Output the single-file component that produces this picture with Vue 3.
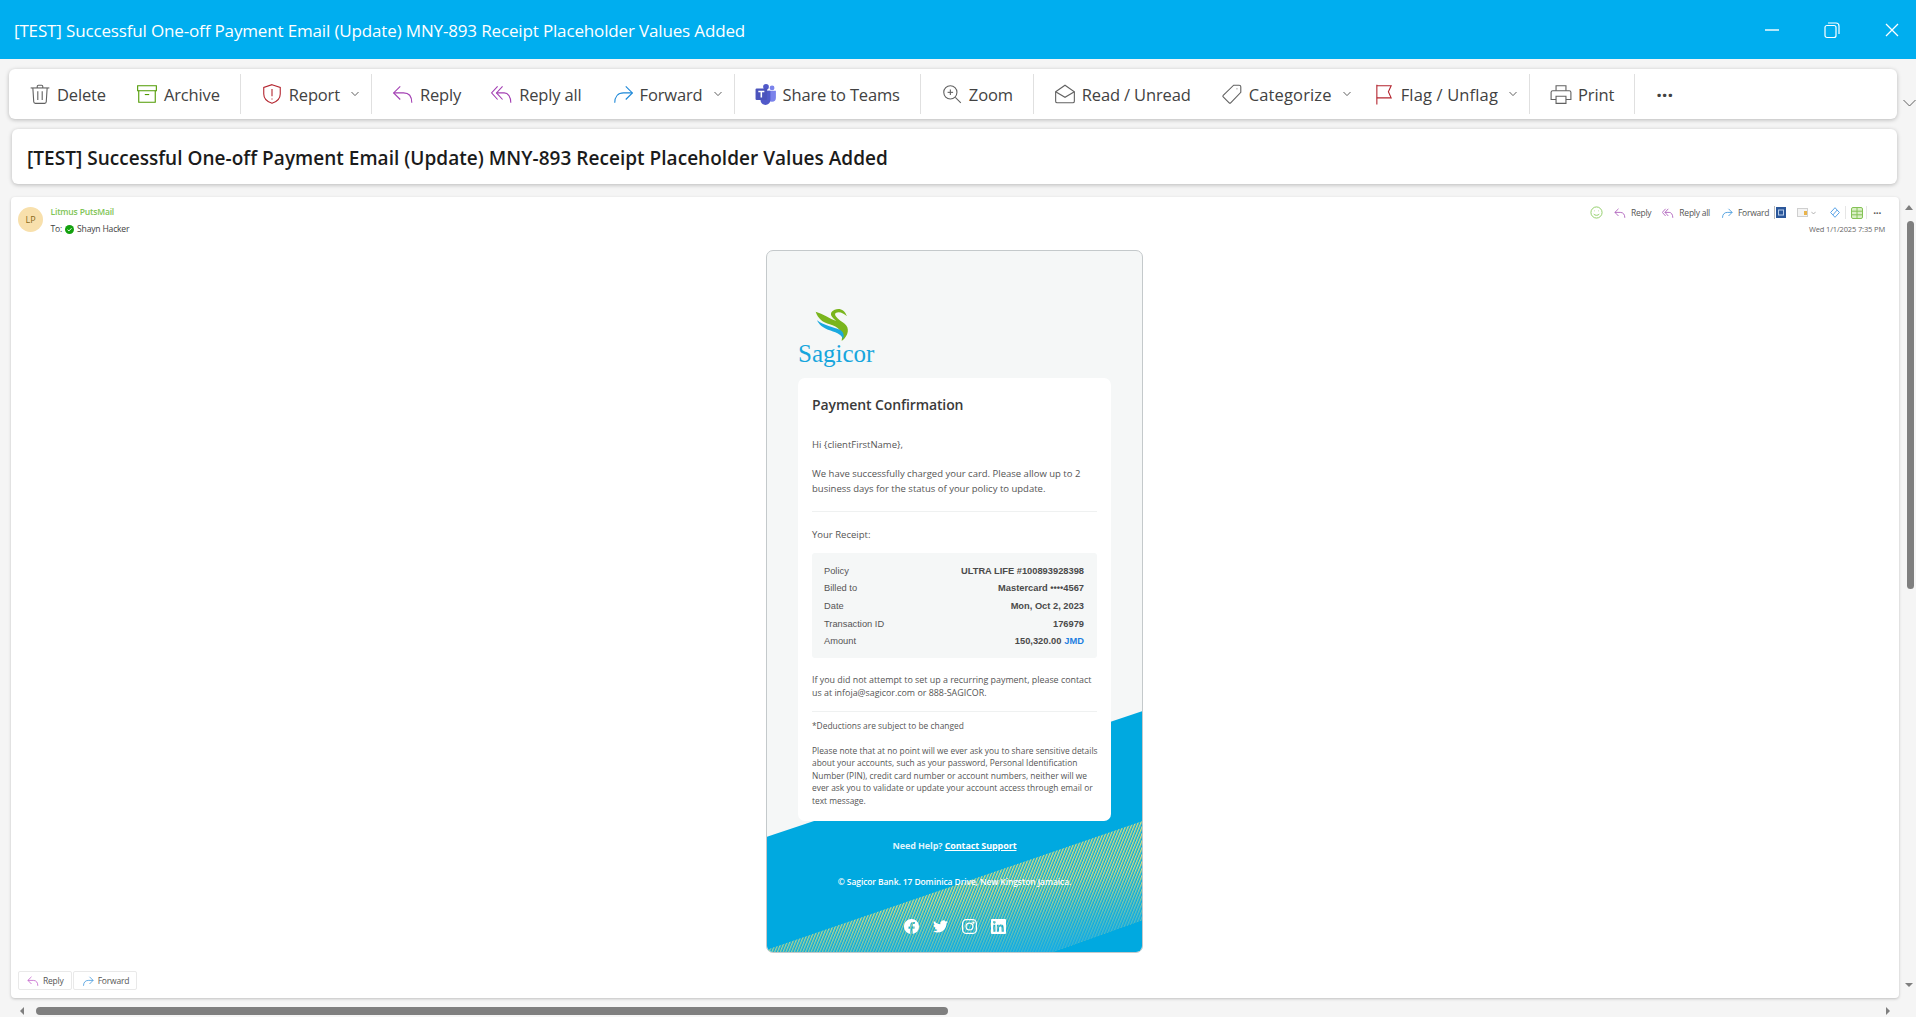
<template>
  <div class="window">
    <header class="titlebar">
      <span class="titlebar-text">{{ subject }}</span>
      <div class="win-controls">
        <svg width="16" height="16" viewBox="0 0 16 16"><path d="M1 8h14" stroke="#fff" stroke-width="1.4" /></svg>
        <svg width="18" height="18" viewBox="0 0 18 18" fill="none" stroke="#fff" stroke-width="1.2"><rect x="2" y="4.5" width="11" height="12" rx="2" /><path d="M5 2h8a3 3 0 0 1 3 3v8" /></svg>
        <svg width="16" height="16" viewBox="0 0 16 16"><path d="M2 2l12 12M14 2L2 14" stroke="#fff" stroke-width="1.3" /></svg>
      </div>
    </header>

    <div class="toolbar-row">
      <nav class="toolbar">
        <template v-for="item in toolbar" :key="item.label || item.sep">
          <span v-if="item.sep" class="tb-sep"></span>
          <button v-else :class="['tb-btn', { 'has-caret': item.caret, loose: item.loose }]">
            <svg v-if="item.icon" class="tb-icon" viewBox="0 0 20 20" fill="none" :stroke="item.color || '#616161'" stroke-width="1">
              <path v-for="d in icons[item.icon]" :key="d" :d="d" />
            </svg>
            <svg v-else class="tb-icon" viewBox="0 0 20 20">
              <circle cx="15.5" cy="4.5" r="2.2" fill="#7b83eb" />
              <circle cx="10" cy="3.5" r="2.6" fill="#5059c9" />
              <path d="M11 7h8v6.5a3.6 3.6 0 0 1-7.2 0z" fill="#7b83eb" />
              <path d="M5 7h9v8.5a4.4 4.4 0 0 1-9 0z" fill="#5059c9" />
              <rect x="0.5" y="5" width="10.5" height="10.5" rx="1" fill="#4b53bc" />
              <path d="M3 7.7h5.5M5.75 7.7v5.4" stroke="#fff" stroke-width="1.4" />
            </svg>
            <span>{{ item.label }}</span>
            <svg v-if="item.caret" class="tb-caret" width="8" height="6" viewBox="0 0 8 6" fill="none" stroke="#616161"><path d="M.5 1L4 4.6 7.5 1" /></svg>
          </button>
        </template>
        <button class="tb-more">···</button>
      </nav>
      <svg class="collapse" width="13" height="8" viewBox="0 0 13 8" fill="none" stroke="#616161"><path d="M.5 1l6 6 6-6" /></svg>
    </div>

    <div class="subject-card">{{ subject }}</div>

    <div class="message-row">
      <section class="message">
        <div class="msg-head">
          <div class="avatar">LP</div>
          <div class="sender">
            <div class="sender-name">Litmus PutsMail</div>
            <div class="sender-to">
              To:
              <svg width="9" height="9" viewBox="0 0 10 10"><circle cx="5" cy="5" r="5" fill="#13a10e" /><path d="M2.8 5.2l1.6 1.4 2.8-3" fill="none" stroke="#fff" /></svg>
              <span>Shayn Hacker</span>
            </div>
          </div>
          <div class="msg-tools">
            <div class="msg-actions">
              <svg class="emoji" width="13" height="13" viewBox="0 0 14 14" fill="none" stroke="#8ccb62"><circle cx="7" cy="7" r="6" /><path d="M4 8.8c1.5 1.6 4.5 1.6 6 0M4.8 5v.6M9.2 5v.6" /></svg>
              <span class="msg-act reply-act"><svg class="mini" viewBox="0 0 20 20" fill="none" stroke="#a957b8" stroke-width="1.4"><path v-for="d in icons.reply" :key="d" :d="d" /></svg>Reply</span>
              <span class="msg-act reply-act"><svg class="mini" viewBox="0 0 20 20" fill="none" stroke="#a957b8" stroke-width="1.4"><path v-for="d in icons.replyAll" :key="d" :d="d" /></svg>Reply all</span>
              <span class="msg-act"><svg class="mini" viewBox="0 0 20 20" fill="none" stroke="#3e96dc" stroke-width="1.4"><path v-for="d in icons.forward" :key="d" :d="d" /></svg>Forward</span>
              <i class="msg-sep first"></i>
              <svg width="10" height="11" viewBox="0 0 10 11"><rect width="10" height="11" fill="#2b579a" /><rect x="2.5" y="3" width="5" height="5" fill="none" stroke="#b8cdea" /></svg>
              <svg class="addin" width="11" height="9" viewBox="0 0 11 9"><rect x=".5" y=".5" width="10" height="8" fill="#f4f4f4" stroke="#cfcfcf" /><rect x="7" y="3" width="3" height="4" fill="#e9b44c" /></svg>
              <svg class="mini-caret" width="5" height="4" viewBox="0 0 8 6" fill="none" stroke="#888"><path d="M.5 1L4 4.6 7.5 1" /></svg>
              <svg class="diamond" width="10" height="11" viewBox="0 0 10 11" fill="none" stroke="#5aa3e8"><path d="M5 .7L9.4 5.5 5 10.3.6 5.5zM2.8 8L7.2 3" /></svg>
              <i class="msg-sep light"></i>
              <svg width="12" height="12" viewBox="0 0 12 12" fill="#d9efc5" stroke="#84c256"><rect x=".5" y=".5" width="11" height="11" rx="1.5" /><path d="M.5 4.2h11M.5 7.8h11M6 .5v11" /></svg>
              <i class="msg-sep light last"></i>
              <span class="msg-more">···</span>
            </div>
            <div class="msg-date">Wed 1/1/2025 7:35 PM</div>
          </div>
        </div>

        <article class="email">
          <svg class="email-bg" viewBox="0 0 377 703" width="377" height="703">
            <defs>
              <pattern id="hatch" width="2.6" height="2.6" patternUnits="userSpaceOnUse" patternTransform="rotate(22)">
                <rect width="1.3" height="2.6" fill="#d8dc7e" />
              </pattern>
              <linearGradient id="fade" x1="0.3" y1="0" x2="0.8" y2="1">
                <stop offset="0.55" stop-color="#00a9e0" stop-opacity="0" />
                <stop offset="1" stop-color="#14ace8" stop-opacity="0.9" />
              </linearGradient>
            </defs>
            <polygon points="0,587 377,461 377,703 0,703" fill="#00a9e0" />
            <polygon points="0,700 377,571 377,670 284,703 0,703" fill="url(#hatch)" />
            <polygon points="0,700 377,571 377,670 284,703 0,703" fill="url(#fade)" />
          </svg>

          <div class="logo">
            <svg class="logo-mark" width="40" height="35" viewBox="100 50 120 105">
              <path d="M108 64C130 70 150 85 170 92 155 80 145 68 165 58 180 52 195 58 202 78 192 68 178 62 168 68 160 75 180 90 195 100 210 112 208 135 186 152 192 125 175 108 150 102 130 96 115 85 108 64Z" fill="#7ab51d" />
              <path d="M112 90C130 105 165 112 180 118 192 124 194 135 190 146 186 130 165 125 145 118 128 112 118 102 112 90Z" fill="#19a9df" />
            </svg>
            <div class="logo-text">Sagicor</div>
          </div>

          <div class="email-card">
            <h1>Payment Confirmation</h1>
            <p class="hi">Hi {clientFirstName},</p>
            <p class="lead">We have successfully charged your card. Please allow up to 2<br />business days for the status of your policy to update.</p>
            <hr class="rule first" />
            <p class="your">Your Receipt:</p>
            <dl class="receipt">
              <div v-for="r in receipt" :key="r.k" class="r-row" :style="{ height: r.h + 'px' }">
                <dt>{{ r.k }}</dt>
                <dd>{{ r.v }}<b v-if="r.cur">{{ r.cur }}</b></dd>
              </div>
            </dl>
            <p class="contact">If you did not attempt to set up a recurring payment, please contact<br />us at infoja@sagicor.com or 888-SAGICOR.</p>
            <hr class="rule" />
            <p class="deduct">*Deductions are subject to be changed</p>
            <p class="note">Please note that at no point will we ever ask you to share sensitive details<br />about your accounts, such as your password, Personal Identification<br />Number (PIN), credit card number or account numbers, neither will we<br />ever ask you to validate or update your account access through email or<br />text message.</p>
          </div>

          <footer class="email-foot">
            <p class="help">Need Help? <a>Contact Support</a></p>
            <p class="addr">© Sagicor Bank. 17 Dominica Drive, New Kingston Jamaica.</p>
            <div class="social">
              <svg viewBox="0 0 24 24" fill="#fff"><path d="M24 12.073c0-6.627-5.373-12-12-12s-12 5.373-12 12c0 5.99 4.388 10.954 10.125 11.854v-8.385H7.078v-3.47h3.047V9.43c0-3.007 1.792-4.669 4.533-4.669 1.312 0 2.686.235 2.686.235v2.953H15.83c-1.491 0-1.956.925-1.956 1.874v2.25h3.328l-.532 3.47h-2.796v8.385C19.612 23.027 24 18.062 24 12.073z" /></svg>
              <svg viewBox="0 0 24 24" fill="#fff"><path d="M23.953 4.57a10 10 0 01-2.825.775 4.958 4.958 0 002.163-2.723c-.951.555-2.005.959-3.127 1.184a4.92 4.92 0 00-8.384 4.482C7.69 8.095 4.067 6.13 1.64 3.162a4.822 4.822 0 00-.666 2.475c0 1.71.87 3.213 2.188 4.096a4.904 4.904 0 01-2.228-.616v.06a4.923 4.923 0 003.946 4.827 4.996 4.996 0 01-2.212.085 4.936 4.936 0 004.604 3.417 9.867 9.867 0 01-6.102 2.105c-.39 0-.779-.023-1.17-.067a13.995 13.995 0 007.557 2.209c9.053 0 13.998-7.496 13.998-13.985 0-.21 0-.42-.015-.63A9.935 9.935 0 0024 4.59z" /></svg>
              <svg viewBox="0 0 24 24" fill="none" stroke="#fff" stroke-width="2"><rect x="1" y="1" width="22" height="22" rx="6" /><circle cx="12" cy="12" r="5.5" /><circle cx="18.2" cy="5.8" r=".8" fill="#fff" /></svg>
              <svg viewBox="0 0 24 24" fill="#fff"><path d="M20.447 20.452h-3.554v-5.569c0-1.328-.027-3.037-1.852-3.037-1.853 0-2.136 1.445-2.136 2.939v5.667H9.351V9h3.414v1.561h.046c.477-.9 1.637-1.85 3.37-1.85 3.601 0 4.267 2.37 4.267 5.455v6.286zM5.337 7.433a2.062 2.062 0 01-2.063-2.065 2.064 2.064 0 112.063 2.065zm1.782 13.019H3.555V9h3.564v11.452zM22.225 0H1.771C.792 0 0 .774 0 1.729v20.542C0 23.227.792 24 1.771 24h20.451C23.2 24 24 23.227 24 22.271V1.729C24 .774 23.2 0 22.222 0h.003z" /></svg>
            </div>
          </footer>
        </article>

        <div class="msg-foot">
          <button class="foot-btn"><svg class="mini" viewBox="0 0 20 20" fill="none" stroke="#c05cc9" stroke-width="1.3"><path v-for="d in icons.reply" :key="d" :d="d" /></svg>Reply</button>
          <button class="foot-btn"><svg class="mini" viewBox="0 0 20 20" fill="none" stroke="#3e96dc" stroke-width="1.3"><path v-for="d in icons.forward" :key="d" :d="d" /></svg>Forward</button>
        </div>
      </section>

      <div class="v-scroll">
        <i class="arrow up"></i>
        <div class="v-thumb"></div>
        <i class="arrow down"></i>
      </div>
    </div>

    <div class="h-scroll">
      <i class="arrow left"></i>
      <div class="h-thumb"></div>
      <i class="arrow right"></i>
    </div>
  </div>
</template>

<script setup>
const subject = '[TEST] Successful One-off Payment Email (Update) MNY-893 Receipt Placeholder Values Added'

const icons = {
  trash: ['M1.5 4.5h17', 'M7.5 4.5V3a1 1 0 0 1 1-1h3a1 1 0 0 1 1 1v1.5', 'M3.5 4.5l.8 12.6A1.5 1.5 0 0 0 5.8 18.5h8.4a1.5 1.5 0 0 0 1.5-1.4l.8-12.6', 'M8 7.5v8', 'M12 7.5v8'],
  archive: ['M1.5 2.5h17v4.5h-17z', 'M2.5 7v10.5h15V7', 'M8 10.5h4'],
  shield: ['M10 1.5l7.5 2.5v6c0 4-3 7-7.5 8.5-4.5-1.5-7.5-4.5-7.5-8.5V4z', 'M10 5.5v6.5', 'M10 14v1'],
  reply: ['M7.5 3L1.5 9l6 6', 'M1.5 9h9c5 0 7.5 3.5 7.5 9'],
  replyAll: ['M6 3L.5 9 6 15', 'M10.5 3L5 9l5.5 6', 'M5 9h7c3.5 0 6 3.5 6 9'],
  forward: ['M12.5 3l6 6-6 6', 'M18.5 9h-8c-5 0-8 3.5-8 9'],
  zoom: ['M8.5 2.5a6 6 0 1 0 0 12 6 6 0 0 0 0-12z', 'M13 13l5 5', 'M8.5 6v5', 'M6 8.5h5'],
  read: ['M1.5 8L10 2l8.5 6v8.5a1.5 1.5 0 0 1-1.5 1.5H3a1.5 1.5 0 0 1-1.5-1.5z', 'M1.5 8l8.5 5 8.5-5'],
  tag: ['M11.5 2h5a1.5 1.5 0 0 1 1.5 1.5v5L8.8 18a1 1 0 0 1-1.4 0L2 12.6a1 1 0 0 1 0-1.4z', 'M14.5 5v.6'],
  flag: ['M3.5 1.5v18', 'M3.5 2.5h13l-2.5 5.5 2.5 5.5h-13'],
  print: ['M5.5 7V2.5h9V7', 'M5.5 15H1V8.5A1.5 1.5 0 0 1 2.5 7h15A1.5 1.5 0 0 1 19 8.5V15h-4.5', 'M5.5 12h9v6.5h-9z']
}

const toolbar = [
  { label: 'Delete', icon: 'trash' },
  { label: 'Archive', icon: 'archive', color: '#4f9a00' },
  { sep: 1 },
  { label: 'Report', icon: 'shield', color: '#b4252f', caret: true },
  { sep: 2 },
  { label: 'Reply', icon: 'reply', color: '#a33fb3' },
  { label: 'Reply all', icon: 'replyAll', color: '#a33fb3' },
  { label: 'Forward', icon: 'forward', color: '#1b87d8', caret: true },
  { sep: 3 },
  { label: 'Share to Teams' },
  { sep: 4 },
  { label: 'Zoom', icon: 'zoom' },
  { sep: 5 },
  { label: 'Read / Unread', icon: 'read' },
  { label: 'Categorize', icon: 'tag', caret: true, loose: true },
  { label: 'Flag / Unflag', icon: 'flag', color: '#b4252f', caret: true, loose: true },
  { sep: 6 },
  { label: 'Print', icon: 'print' },
  { sep: 7 }
]

const receipt = [
  { k: 'Policy', v: 'ULTRA LIFE #100893928398', h: 17 },
  { k: 'Billed to', v: 'Mastercard ••••4567', h: 18 },
  { k: 'Date', v: 'Mon, Oct 2, 2023', h: 18 },
  { k: 'Transaction ID', v: '176979', h: 17 },
  { k: 'Amount', v: '150,320.00', cur: 'JMD', h: 17 }
]
</script>

<style>
html, body { margin: 0; overflow: hidden; background: #f5f5f5; }
</style>

<style scoped>
.window {
  width: 1916px;
  height: 1017px;
  display: flex;
  flex-direction: column;
  background: #f5f5f5;
  font-family: "Open Sans", "Noto Sans", sans-serif;
  color: #424242;
  overflow: hidden;
}

.titlebar {
  flex: 0 0 59px;
  box-sizing: border-box;
  background: #00aeef;
  display: flex;
  align-items: center;
  padding: 1px 16px 0 14px;
  color: #fff;
}
.titlebar-text { font-size: 17px; letter-spacing: -.15px; flex: 1; }
.win-controls { display: flex; align-items: center; gap: 43px; margin-top: -1px; }

.toolbar-row { display: flex; align-items: center; margin-top: 10px; height: 50px; padding-left: 9px; }
.toolbar {
  width: 1888px;
  height: 50px;
  box-sizing: border-box;
  background: #fff;
  border-radius: 6px;
  box-shadow: 0 1px 4px rgba(0,0,0,.25);
  display: flex;
  align-items: center;
  padding: 0 10px;
  gap: 10px;
}
.tb-btn {
  display: flex;
  align-items: center;
  gap: 6px;
  padding: 0 10px;
  height: 40px;
  border: 0;
  background: none;
  font-family: inherit;
  font-size: 16.5px;
  letter-spacing: -.15px;
  color: #424242;
  white-space: nowrap;
}
.tb-btn.loose { letter-spacing: .15px; }
.tb-btn.has-caret { padding-right: 2px; }
.tb-icon { width: 22px; height: 22px; flex: none; }
.tb-caret { margin-left: 5px; }
.tb-sep { width: 1px; height: 40px; background: #e0e0e0; flex: none; }
.tb-more { border: 0; background: none; font-size: 20px; font-weight: 700; color: #424242; padding: 0 11px; font-family: inherit; }
.collapse { margin: 18px 0 0 6px; flex: none; }

.subject-card {
  margin: 10px 19px 0 12px;
  height: 55px;
  line-height: 59px;
  padding-left: 15px;
  background: #fff;
  border-radius: 6px;
  box-shadow: 0 1px 4px rgba(0,0,0,.25);
  font-size: 19px;
  font-weight: 600;
  letter-spacing: .03px;
  color: #1b1b1b;
}

.message-row { flex: 1; display: flex; margin-top: 13px; min-height: 0; }
.message {
  margin-left: 11px;
  width: 1888px;
  background: #fff;
  border-radius: 4px;
  box-shadow: 0 1px 3px rgba(0,0,0,.22);
  position: relative;
}

.msg-head { height: 53px; display: flex; padding: 9px 17px 0 7px; box-sizing: border-box; }
.avatar {
  width: 25px;
  height: 25px;
  margin-top: 1px;
  border-radius: 50%;
  background: #f8e0ac;
  color: #8b6a1c;
  font-size: 9px;
  text-align: center;
  line-height: 25px;
}
.sender { margin-left: 7.5px; padding-top: 1px; font-size: 8.6px; letter-spacing: -.2px; }
.sender-name { color: #7fc556; font-weight: 600; line-height: 11px; margin-top: 0; }
.sender-to { margin-top: 5px; display: flex; align-items: center; gap: 3px; line-height: 12px; color: #424242; }
.msg-tools { margin-left: auto; display: flex; flex-direction: column; align-items: flex-end; }
.msg-actions { display: flex; align-items: center; height: 13px; font-size: 8.5px; letter-spacing: -.25px; color: #555; }
.msg-act { display: flex; align-items: center; gap: 5px; margin-left: 11px; }
.mini { width: 12px; height: 12px; flex: none; }
.msg-sep { width: 1px; height: 13px; background: #bbb; margin: 0 5px; }
.msg-sep.first { margin-right: 1px; }
.msg-sep.light { background: #e6e6e6; }
.msg-sep.last { margin: 0 3px; }
.addin { margin-left: 11px; }
.mini-caret { margin: 0 14px 0 3px; }
.msg-more { font-weight: 700; font-size: 10px; margin: 0 1px 0 3px; }
.msg-date { font-size: 7.5px; letter-spacing: -.14px; color: #666; margin: 5px -3px 0 0; }

.email {
  position: relative;
  width: 377px;
  height: 703px;
  box-sizing: border-box;
  margin: 0 0 0 755px;
  background: #f5f7f7;
  border: 1px solid #c4c9cb;
  border-radius: 7px;
  overflow: hidden;
}
.email-bg { position: absolute; left: -1px; top: -1px; }
.logo { position: relative; height: 127px; padding: 56px 0 0 31px; box-sizing: border-box; }
.logo-mark { display: block; margin-left: 15px; }
.logo-text { font-family: "Liberation Serif", serif; font-size: 25px; line-height: 25px; color: #17a6dd; margin-top: -1px; }

.email-card {
  position: relative;
  margin: 0 31px;
  height: 443px;
  box-sizing: border-box;
  padding: 18px 14px 0;
  background: #fff;
  border-radius: 7px;
  font-size: 8.9px;
  color: #555;
  white-space: nowrap;
}
.email-card h1 { margin: 0; font-size: 14px; line-height: 18px; font-weight: 600; color: #3a3a3a; letter-spacing: -.1px; }
.email-card p { margin: 0; }
.hi { margin-top: 23px !important; line-height: 15px; font-size: 9.5px; }
.lead { margin-top: 13.5px !important; line-height: 15px; font-size: 9.5px; }
.rule { border: 0; border-top: 1px solid #eff1f1; margin: 0; }
.rule.first { margin-top: 15.5px; }
.your { margin-top: 15px !important; line-height: 15px; font-size: 9.5px; }
.receipt {
  margin: 11px 0 0;
  height: 105px;
  box-sizing: border-box;
  padding: 9px 13px 0 12px;
  background: #f5f7f7;
  border-radius: 3px;
  font-family: "Liberation Sans", sans-serif;
  font-size: 9.3px;
}
.r-row { display: flex; justify-content: space-between; align-items: center; }
.r-row dd { margin: 0; font-weight: 700; color: #4a4a4a; }
.r-row b { color: #1e7fe0; margin-left: 3px; }
.contact { margin-top: 15px !important; line-height: 13px; }
.rule:not(.first) { margin-top: 12px; }
.deduct { margin-top: 7px !important; line-height: 13px; font-size: 8.4px; }
.note { margin-top: 12.5px !important; line-height: 12.5px; font-size: 8.4px; }

.email-foot { position: relative; text-align: center; color: #fff; font-size: 9px; font-weight: 700; letter-spacing: -.1px; }
.email-foot p { margin: 0; }
.help { padding-top: 18px; line-height: 14px; color: #dff4fc; }
.help a { color: #fff; text-decoration: underline; }
.addr { margin-top: 22px !important; line-height: 14px; font-size: 8.5px; font-weight: 600; }
.social { display: flex; justify-content: center; gap: 14px; margin-top: 30px; }
.social svg { width: 15px; height: 15px; }

.msg-foot { display: flex; gap: 1px; padding: 18px 0 0 7px; }
.foot-btn {
  display: flex;
  align-items: center;
  gap: 4px;
  height: 19px;
  padding: 0 7px 0 8px;
  background: #fff;
  border: 1px solid #e9e9e9;
  border-radius: 2px;
  font-family: inherit;
  font-size: 8.5px;
  letter-spacing: -.2px;
  color: #555;
}

.v-scroll { width: 17px; position: relative; }
.v-thumb { position: absolute; left: 8px; top: 24px; width: 7px; height: 368px; border-radius: 4px; background: #7f7f7f; }
.h-scroll { height: 19px; position: relative; }
.h-thumb { position: absolute; left: 36px; top: 9px; width: 912px; height: 8px; border-radius: 4px; background: #7f7f7f; }
.arrow { position: absolute; width: 0; height: 0; border-style: solid; border-color: transparent; }
.arrow.up { left: 6px; top: 8px; border-width: 0 4px 5px; border-bottom-color: #7f7f7f; }
.arrow.down { left: 6px; bottom: 11px; border-width: 4px 4px 0; border-top-color: #7f7f7f; }
.arrow.left { left: 20px; top: 9px; border-width: 4px 4px 4px 0; border-right-color: #7f7f7f; }
.arrow.right { left: 1886px; top: 9px; border-width: 4px 0 4px 4px; border-left-color: #7f7f7f; }
</style>
